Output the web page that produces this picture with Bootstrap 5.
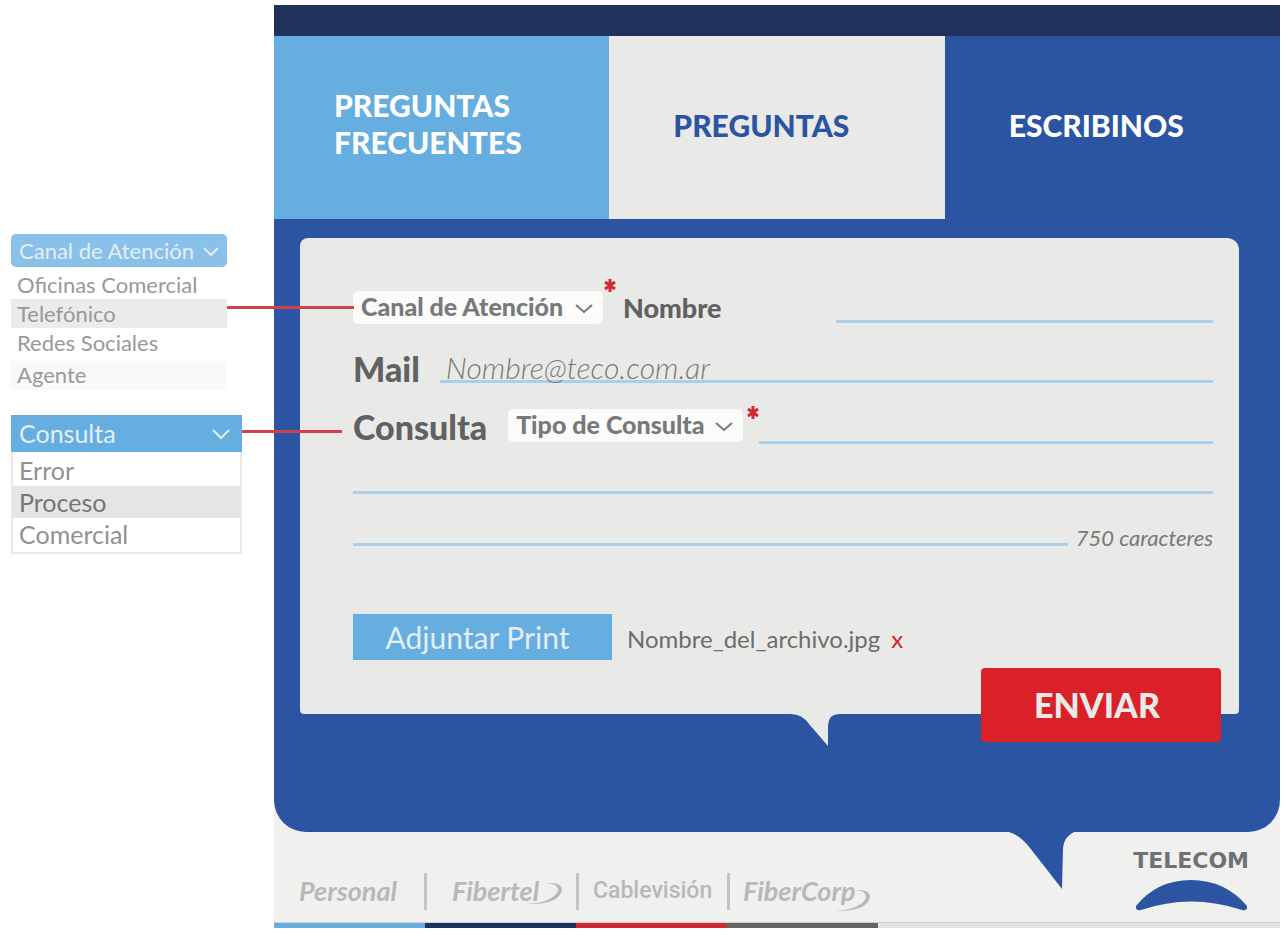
<!DOCTYPE html>
<html lang="es">
<head>
<meta charset="utf-8">
<meta name="viewport" content="width=device-width, initial-scale=1">
<title>Escribinos</title>
<link href="https://cdn.jsdelivr.net/npm/bootstrap@5.3.0/dist/css/bootstrap.min.css" rel="stylesheet">
<style>
:root { --sky: #66ade0; --royal: #2b55a3; --navy: #20315c; --paper: #e9eae7; --ink: #606163; --rule: #a9cfea; --alert: #da2128; }
body { font-family: Lato, "Liberation Sans", sans-serif; color: var(--ink); background: #fff; padding: 5px 3px 7px 0; }
button, select, input { font-family: inherit; }

/* Option menus beside the form */
.side { width: 274px; padding: 229px 0 0 11px; }
.opt-head { border: 0; color: #e4eef5; text-align: left; font-size: 22px; line-height: 33px; padding: 0 8px; white-space: nowrap; }
.opt-list a { display: block; text-decoration: none; color: #97999b; font-size: 22px; line-height: 29px; padding: 0 6px; }
.menu-channel { width: 216px; }
.menu-channel .opt-head { background: #8ac1ea; border-radius: 5px; }
.menu-channel .opt-list { padding-top: 3px; }
.menu-channel a.picked { background: #ebebeb; }
.menu-channel a.muted { background: #f9f9f9; margin-top: 4px; line-height: 27px; padding-bottom: 2px; }
.menu-query { width: 231px; margin-top: 25px; }
.menu-query .opt-head { background: var(--sky); font-size: 25px; line-height: 37px; padding-right: 12px; }
.menu-query .opt-list { border: 2px solid #e9e9e9; border-top: 0; padding: 2px 0; }
.menu-query a { font-size: 25px; line-height: 32px; color: #8f9193; }
.menu-query a.picked { background: #e5e5e5; color: #737577; }
.callout { position: absolute; left: 100%; top: 50%; height: 3px; background: #cf4247; z-index: 5; pointer-events: none; }
.callout-channel { width: 127px; margin-top: -8px; }
.callout-query { width: 100px; margin-top: -4px; }

/* Header tabs */
.topbar { height: 31px; background: var(--navy); }
.tab-box { height: 183px; padding: 0 12px 4px 64px; font-size: 30px; font-weight: 900; line-height: 37px; text-decoration: none; }
.tab-sky { background: var(--sky); color: #fff; padding-left: 60px; padding-bottom: 8px; }
.tab-paper { background: var(--paper); color: var(--royal); }
.tab-royal { background: var(--royal); color: #fff; }

/* Speech-bubble panels */
.foot-bg { background: #f0f0ee; }
.panel { background: var(--royal); border-radius: 0 0 32px 32px; padding: 19px 41px 118px 26px; position: relative; }
.bubble { background: var(--paper); border-radius: 8px 12px 4px 4px; padding: 53px 26px 54px 53px; position: relative; }
.tail { position: absolute; top: 100%; margin-top: -1px; }
.tail-big { right: 205px; }
.tail-small { right: 400px; }
.row-name { height: 60px; }
.row-mail { height: 58px; }
.row-query { height: 50px; }
.lab { font-weight: 900; font-size: 34px; line-height: 36px; }
.lab-s { font-weight: 900; font-size: 27px; line-height: 34px; }
.pick { border: 0; border-radius: 5px; background-color: #fbfbf9; color: #77797b; font-weight: 900; font-size: 25px; line-height: 30px; height: 33px; padding: 0 30px 3px 8px; appearance: none; background-repeat: no-repeat; background-position: right 10px center; background-size: 18px 12px;
  background-image: url("data:image/svg+xml,%3Csvg xmlns='http://www.w3.org/2000/svg' viewBox='0 0 18 12'%3E%3Cpath d='M1 3l8 7 8-7' fill='none' stroke='%2377797b' stroke-width='2'/%3E%3C/svg%3E"); }
.pick-channel { width: 250px; }
.pick-query { width: 235px; margin-left: 21px; }
.star { width: 12px; height: 13px; flex-shrink: 0; }
.star-name { margin: -12px 7px 0 1px; }
.star-query { margin: -3px 0 0 4px; }
.rule { border: 0; border-radius: 0; background: linear-gradient(var(--rule), var(--rule)) left bottom / 100% 3px no-repeat; color: #77797b; padding: 0; min-width: 0; height: 32px; outline: 0; }
.rule-name { margin-left: 114px; }
.rule-mail { margin-left: 20px; font-size: 30px; font-style: italic; font-weight: 300; padding-left: 6px; line-height: 32px; }
.rule-mail::placeholder { color: #77797b; opacity: 1; }
.rule-query { height: 35px; }
.rule-last { height: 52px; }
.count { font-size: 22px; font-style: italic; line-height: 16px; margin-left: 8px; color: #77797b; }
.attach-row { margin-top: 68px; }
.attach { background: var(--sky); color: #e4eef5; border: 0; width: 259px; height: 46px; font-size: 30px; line-height: 46px; padding: 0 10px 0 0; }
.file-name { font-size: 24px; line-height: 30px; color: #6b6d6f; padding-top: 4px; margin-left: 15px; }
.file-x { border: 0; background: none; padding: 4px 0 0; margin-left: 11px; color: var(--alert); font-size: 24px; line-height: 30px; }
.send { position: absolute; right: 18px; bottom: -28px; width: 240px; height: 74px; border: 0; border-radius: 4px; background: var(--alert); color: var(--paper); font-weight: 900; font-size: 34px; padding: 0 8px 2px 0; }

/* Footer brands */
.brands { padding: 11px 31px 10px 25px; height: 90px; }
.brand-list { padding-top: 27px; }
.brand { color: #b6b9ba; font-size: 27px; line-height: 36px; font-weight: 700; text-decoration: none; white-space: nowrap; position: relative; }
.brand-personal { width: 125px; }
.brand-fibertel { width: 149px; padding-left: 25px; }
.brand-cable { width: 148px; padding-left: 14px; font-family: Roboto, sans-serif; font-weight: 500; font-size: 23px; }
.brand-corp { padding-left: 13px; }
.swoosh { position: absolute; }
.swoosh-tel { left: 98px; top: 9px; }
.swoosh-corp { right: -15px; top: 16px; }
.bar { width: 3px; height: 37px; background: #c2c5c7; }
.telecom { font-family: "DejaVu Sans", sans-serif; font-weight: 700; font-size: 22px; line-height: 36px; color: #707173; }
.stripes { height: 6px; border-top: 1px solid #cfcfcf; background: #e3e4e7; }
.stripes span { width: 15%; }
.s-sky { background: var(--sky); } .s-navy { background: var(--navy); } .s-red { background: #cf2a30; } .s-gray { background: #656565; }
</style>
</head>
<body>
<div class="d-flex align-items-start">

  <aside class="side flex-shrink-0">
    <div class="menu-channel">
      <button type="button" class="opt-head w-100 d-flex align-items-center justify-content-between">Canal de Atención
        <svg width="16" height="12" viewBox="0 0 16 12" fill="none" stroke="currentColor" stroke-width="2"><path d="M1 3l7 7 7-7"/></svg></button>
      <nav class="opt-list">
        <a href="#">Oficinas Comercial</a>
        <a href="#" class="picked position-relative">Telefónico<span class="callout callout-channel"></span></a>
        <a href="#">Redes Sociales</a>
        <a href="#" class="muted">Agente</a>
      </nav>
    </div>
    <div class="menu-query">
      <button type="button" class="opt-head w-100 d-flex align-items-center justify-content-between position-relative">Consulta
        <svg width="18" height="12" viewBox="0 0 18 12" fill="none" stroke="currentColor" stroke-width="2"><path d="M1 2l8 8 8-8"/></svg>
        <span class="callout callout-query"></span></button>
      <nav class="opt-list">
        <a href="#">Error</a>
        <a href="#" class="picked">Proceso</a>
        <a href="#">Comercial</a>
      </nav>
    </div>
  </aside>

  <main class="flex-grow-1 foot-bg">
    <div class="topbar"></div>
    <nav class="row g-0">
      <a href="#" class="col-4 tab-box tab-sky d-flex align-items-center">PREGUNTAS<br>FRECUENTES</a>
      <a href="#" class="col-4 tab-box tab-paper d-flex align-items-center">PREGUNTAS</a>
      <a href="#" class="col-4 tab-box tab-royal d-flex align-items-center">ESCRIBINOS</a>
    </nav>

    <section class="panel">
      <form class="bubble">
        <div class="row-name d-flex align-items-start">
          <select class="pick pick-channel" aria-label="Canal de Atención"><option>Canal de Atención</option><option>Oficinas Comercial</option><option>Telefónico</option><option>Redes Sociales</option><option>Agente</option></select>
          <svg class="star star-name" viewBox="0 0 12 13" stroke="#cf2a30" stroke-width="3"><path d="M6 0v13M1 3l10 7M11 3L1 10"/></svg>
          <label class="lab-s" for="nombre">Nombre</label>
          <input class="rule rule-name flex-grow-1" id="nombre" type="text">
        </div>
        <div class="row-mail d-flex align-items-start">
          <label class="lab" for="mail">Mail</label>
          <input class="rule rule-mail flex-grow-1" id="mail" type="email" placeholder="Nombre@teco.com.ar">
        </div>
        <div class="row-query d-flex align-items-start">
          <label class="lab" for="consulta">Consulta</label>
          <select class="pick pick-query" aria-label="Tipo de Consulta"><option>Tipo de Consulta</option><option>Error</option><option>Proceso</option><option>Comercial</option></select>
          <svg class="star star-query" viewBox="0 0 12 13" stroke="#cf2a30" stroke-width="3"><path d="M6 0v13M1 3l10 7M11 3L1 10"/></svg>
          <input class="rule rule-query flex-grow-1" id="consulta" type="text">
        </div>
        <input class="rule rule-query w-100 d-block" type="text" aria-label="Consulta, segunda línea">
        <div class="d-flex align-items-end"><input class="rule rule-last flex-grow-1" type="text" aria-label="Consulta, tercera línea"><span class="count">750 caracteres</span></div>
        <div class="d-flex align-items-center attach-row">
          <button type="button" class="attach">Adjuntar Print</button>
          <span class="file-name">Nombre_del_archivo.jpg</span>
          <button type="button" class="file-x" aria-label="Quitar archivo">x</button>
        </div>
        <svg class="tail tail-small" width="48" height="34" viewBox="0 0 48 34" fill="#e9eae7"><path d="M0 0V1Q11 1 18 11L37 33V12Q38 1 48 1V0Z"/></svg>
        <button type="submit" class="send">ENVIAR</button>
      </form>
      <svg class="tail tail-big" width="66" height="59" viewBox="0 0 66 59" fill="#2b55a3"><path d="M0 0V1Q11 4 21 17L53 58L54 17Q55 6 65 1V0Z"/></svg>
    </section>

    <footer>
      <div class="brands d-flex justify-content-between">
        <div class="d-flex align-items-center brand-list">
          <a href="#" class="brand brand-personal fst-italic">Personal</a>
          <span class="bar"></span>
          <a href="#" class="brand brand-fibertel fst-italic">Fibertel<svg class="swoosh swoosh-tel" width="38" height="24" viewBox="0 0 38 24" fill="#b6b9ba"><path d="M21 1Q37 0 37 8Q34 23 1 22Q27 21 33 9Q34 2 21 1Z"/></svg></a>
          <span class="bar"></span>
          <a href="#" class="brand brand-cable">Cablevisión</a>
          <span class="bar"></span>
          <a href="#" class="brand brand-corp fst-italic">FiberCorp<svg class="swoosh swoosh-corp" width="38" height="24" viewBox="0 0 38 24" fill="#b6b9ba"><path d="M23 1Q37 0 37 8Q34 23 1 22Q27 21 33 9Q34 2 23 1Z"/></svg></a>
        </div>
        <div class="d-flex flex-column align-items-center">
          <span class="telecom">TELECOM</span>
          <svg width="113" height="32" viewBox="0 0 113 32" fill="#2b55a3"><path d="M1 27Q22 1 56 1T112 27Q113 32 107 31Q56 14 6 31Q0 32 1 27Z"/></svg>
        </div>
      </div>
      <div class="stripes d-flex"><span class="s-sky"></span><span class="s-navy"></span><span class="s-red"></span><span class="s-gray"></span></div>
    </footer>
  </main>
</div>
<script src="https://cdn.jsdelivr.net/npm/bootstrap@5.3.0/dist/js/bootstrap.bundle.min.js"></script>
</body>
</html>
